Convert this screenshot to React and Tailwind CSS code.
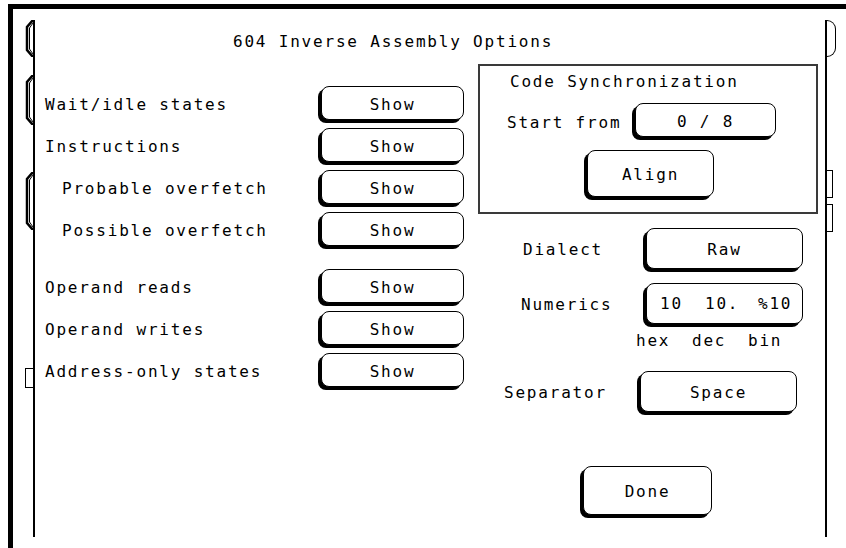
const Btn = ({ className, children }) => (
  <div
    className={
      "flex items-center justify-center pt-[3px] rounded-[8px] border border-black bg-white shadow-[-3px_3px_0_0_#000] " +
      className
    }
  >
    {children}
  </div>
);

const LeftTab = ({ h, className }) => (
  <svg width="9" height={h} viewBox={`0 0 9 ${h}`} className={className}>
    <path d={`M9 0 L3 7 L3 ${h - 7} L9 ${h}`} fill="none" stroke="#000" strokeWidth="2.5" />
    <path d={`M9 3 L5.5 8 L5.5 ${h - 8} L9 ${h - 3}`} fill="none" stroke="#000" strokeWidth="1" />
  </svg>
);

const showRows = [
  { label: "Wait/idle states", indent: "pl-[10px]" },
  { label: "Instructions", indent: "pl-[10px]" },
  { label: "Probable overfetch", indent: "pl-[27px]" },
  { label: "Possible overfetch", indent: "pl-[27px]" },
  { label: "Operand reads", indent: "pl-[10px]", gap: true },
  { label: "Operand writes", indent: "pl-[10px]" },
  { label: "Address-only states", indent: "pl-[10px]" },
];

export default function App() {
  return (
    <div className="w-[846px] h-[548px] bg-white pt-[4px] pl-[8px] flex flex-col font-['DejaVu_Sans_Mono',monospace] text-[16px] leading-[20px] tracking-[1.8px] text-black">
      {/* frame top bar */}
      <div className="h-[5px] w-full bg-black shrink-0" />
      <div className="flex flex-1">
        {/* frame left bar */}
        <div className="w-[5px] bg-black shrink-0" />

        <div className="flex pt-[11px]">
          {/* left softkey tabs */}
          <div className="w-[20px] h-[517px] flex flex-col items-end">
            <LeftTab h={37} />
            <LeftTab h={50} className="mt-[18px]" />
            <LeftTab h={58} className="mt-[47px]" />
            <div className="mt-[138px] w-[8px] h-[20px] border border-r-0 border-black" />
          </div>
          <div className="w-[2px] h-[517px] bg-black" />

          <div className="w-[790px] h-[517px] flex flex-col">
            <div className="pt-[12px] pl-[198px] whitespace-pre">604 Inverse Assembly Options</div>

            <div className="flex gap-[14px]">
              {/* left column */}
              <div className="w-[429px] mt-[34px] flex flex-col gap-[5px]">
                {showRows.map((r) => (
                  <div key={r.label} className={"flex items-center h-[37px] " + (r.gap ? "mt-[15px]" : "")}>
                    <div className={"w-[283px] whitespace-pre " + r.indent}>{r.label}</div>
                    <Btn className="ml-[3px] mb-[3px] w-[143px] h-[34px]">Show</Btn>
                  </div>
                ))}
              </div>

              {/* right column */}
              <div className="w-[340px] mt-[12px] flex flex-col">
                <div className="border-2 border-[#3a3a3a] pt-[6px] pb-[15px]">
                  <div className="pl-[30px]">Code Synchronization</div>
                  <div className="mt-[11px] flex items-center h-[37px]">
                    <div className="w-[152px] pl-[27px] pt-[2px] whitespace-pre">Start from</div>
                    <Btn className="ml-[3px] mb-[3px] w-[141px] h-[34px] whitespace-pre">0 / 8</Btn>
                  </div>
                  <Btn className="mt-[10px] ml-[107px] w-[127px] h-[47px]">Align</Btn>
                </div>

                <div className="mt-[14px] flex items-center h-[44px]">
                  <div className="w-[165px] pl-[45px]">Dialect</div>
                  <Btn className="ml-[3px] mb-[3px] w-[157px] h-[41px]">Raw</Btn>
                </div>

                <div className="mt-[11px] flex items-center h-[44px]">
                  <div className="w-[165px] pl-[43px]">Numerics</div>
                  <div className="ml-[3px] mb-[3px] w-[157px] h-[41px] flex items-center pl-[13px] pt-[1px] rounded-[8px] border border-black bg-white shadow-[-3px_3px_0_0_#000]">
                    <span className="w-[45px]">10</span>
                    <span className="w-[53px]">10.</span>
                    <span>%10</span>
                  </div>
                </div>

                <div className="mt-[4px] flex pl-[158px]">
                  <span className="w-[56px]">hex</span>
                  <span className="w-[56px]">dec</span>
                  <span>bin</span>
                </div>

                <div className="mt-[20px] flex items-center h-[44px]">
                  <div className="w-[159px] pl-[26px]">Separator</div>
                  <Btn className="ml-[3px] mb-[3px] w-[157px] h-[41px]">Space</Btn>
                </div>

                <Btn className="mt-[51px] ml-[105px] w-[129px] h-[49px]">Done</Btn>
              </div>
            </div>
          </div>

          <div className="w-[2px] h-[517px] bg-black" />
          {/* right softkey tabs */}
          <div className="w-[10px] h-[517px] flex flex-col items-start">
            <div className="w-[9px] h-[37px] border border-l-0 border-black rounded-r-full" />
            <div className="mt-[113px] w-[6px] h-[28px] border border-l-0 border-black" />
            <div className="mt-[6px] w-[6px] h-[28px] border border-l-0 border-black" />
          </div>
        </div>
      </div>
    </div>
  );
}
